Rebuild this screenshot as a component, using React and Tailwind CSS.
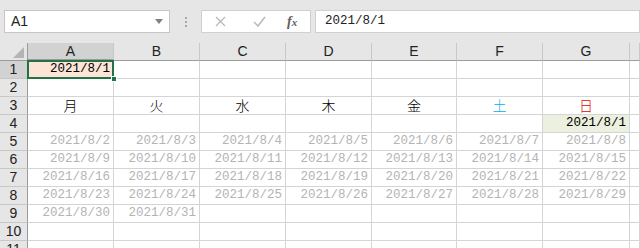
import React from "react";

const cols = ["A", "B", "C", "D", "E", "F", "G", ""];

// week rows of dates shown in gray
const weeks = [
  [2, 3, 4, 5, 6, 7, 8],
  [9, 10, 11, 12, 13, 14, 15],
  [16, 17, 18, 19, 20, 21, 22],
  [23, 24, 25, 26, 27, 28, 29],
  [30, 31],
];

const days = [
  { label: "月", color: "text-black" },
  { label: "火", color: "text-black" },
  { label: "水", color: "text-black" },
  { label: "木", color: "text-black" },
  { label: "金", color: "text-black" },
  { label: "土", color: "text-[#00b0f0]" },
  { label: "日", color: "text-[#e00000]" },
];

const numFont = "font-['Liberation_Mono','DejaVu_Sans_Mono',monospace]";

function Cell({ children, className = "" }) {
  return (
    <div
      className={`flex items-center border-r border-b border-[#d4d4d4] overflow-visible whitespace-nowrap ${className}`}
    >
      {children}
    </div>
  );
}

function RowHead({ n, active }) {
  return (
    <div
      className={`flex items-center justify-center border-r border-b border-[#c8c8c8] text-[14px] text-[#222] font-['Liberation_Sans',sans-serif] ${
        active ? "bg-[#d2d2d2] border-r-[#9b9b9b]" : "bg-[#e6e6e6] border-r-[#9b9b9b]"
      }`}
    >
      {n}
    </div>
  );
}

function DateCell({ text, className = "" }) {
  return (
    <Cell className={`justify-end pr-[3px] text-[12.5px] ${numFont} ${className}`}>
      {text}
    </Cell>
  );
}

function TopBar() {
  return (
    <div className="h-[43px] bg-[#e6e6e6] flex items-start pt-[10px] pl-[4px] font-['Liberation_Sans',sans-serif]">
      <div className="w-[166px] h-[23px] bg-white border border-[#c6c6c6] flex items-center justify-between pl-[6px] pr-[6px]">
        <span className="text-[14px] text-[#222]">A1</span>
        <svg width="8" height="5" viewBox="0 0 8 5">
          <path d="M0 0 L8 0 L4 5 Z" fill="#808080" />
        </svg>
      </div>
      <div className="w-[31px] h-[23px] flex flex-col items-center justify-center gap-[2px]">
        <span className="w-[2px] h-[2px] bg-[#a8a8a8]" />
        <span className="w-[2px] h-[2px] bg-[#a8a8a8]" />
        <span className="w-[2px] h-[2px] bg-[#a8a8a8]" />
      </div>
      <div className="w-[110px] h-[23px] bg-white border border-[#d0d0d0] flex items-center">
        <svg className="ml-[13px]" width="11" height="11" viewBox="0 0 11 11">
          <path d="M1 1 L10 10 M10 1 L1 10" stroke="#b8b8b8" strokeWidth="1.3" />
        </svg>
        <svg className="ml-[27px]" width="13" height="11" viewBox="0 0 13 11">
          <path d="M1 6 L5 10 L12 1" stroke="#b8b8b8" strokeWidth="1.5" fill="none" />
        </svg>
        <span className="ml-[21px] text-[14px] italic font-['Liberation_Serif',serif] text-[#606060] font-bold">
          f<span className="text-[11px]">x</span>
        </span>
      </div>
      <div className="ml-[4px] flex-1 h-[23px] bg-white border border-[#d0d0d0] flex items-center pl-[9px]">
        <span className={`text-[12.5px] text-[#222] ${numFont}`}>2021/8/1</span>
      </div>
    </div>
  );
}

export default function App() {
  const rows = [];

  // row 1
  rows.push(
    <React.Fragment key="r1">
      <RowHead n={1} active />
      <div className="relative">
        <DateCell text="2021/8/1" className="h-full bg-[#fce4d6] text-black" />
        <div className="absolute -left-[1px] -top-[1px] -right-[0px] -bottom-[0px] border-2 border-[#217346] pointer-events-none" />
        <div className="absolute -right-[3px] -bottom-[3px] w-[6px] h-[6px] bg-[#217346] border border-white" />
      </div>
      {cols.slice(1).map((c, i) => (
        <Cell key={i} />
      ))}
    </React.Fragment>
  );

  // row 2
  rows.push(
    <React.Fragment key="r2">
      <RowHead n={2} />
      {cols.map((c, i) => (
        <Cell key={i} />
      ))}
    </React.Fragment>
  );

  // row 3: weekdays
  rows.push(
    <React.Fragment key="r3">
      <RowHead n={3} />
      {days.map((d, i) => (
        <Cell
          key={i}
          className={`justify-center text-[14px] font-['Noto_Sans_CJK_JP',sans-serif] font-light ${d.color}`}
        >
          {d.label}
        </Cell>
      ))}
      <Cell />
    </React.Fragment>
  );

  // row 4
  rows.push(
    <React.Fragment key="r4">
      <RowHead n={4} />
      {cols.slice(0, 6).map((c, i) => (
        <Cell key={i} />
      ))}
      <DateCell text="2021/8/1" className="bg-[#ebf1de] text-black" />
      <Cell />
    </React.Fragment>
  );

  // rows 5-9
  weeks.forEach((w, ri) => {
    rows.push(
      <React.Fragment key={`w${ri}`}>
        <RowHead n={5 + ri} />
        {cols.map((c, i) =>
          i < w.length ? (
            <DateCell key={i} text={`2021/8/${w[i]}`} className="text-[#b4b4b4]" />
          ) : (
            <Cell key={i} />
          )
        )}
      </React.Fragment>
    );
  });

  // rows 10-11
  [10, 11].forEach((n) => {
    rows.push(
      <React.Fragment key={`e${n}`}>
        <RowHead n={n} />
        {cols.map((c, i) => (
          <Cell key={i} />
        ))}
      </React.Fragment>
    );
  });

  return (
    <div className="w-[640px] h-[248px] overflow-hidden bg-white">
      <TopBar />
      <div className="grid grid-cols-[28px_86px_86px_86px_86px_85px_86px_87px_1fr] auto-rows-[18px]">
        {/* header row */}
        <div className="relative bg-[#e6e6e6] border-r border-b border-[#9b9b9b]">
          <svg className="absolute right-[3px] bottom-[2px]" width="11" height="11" viewBox="0 0 11 11">
            <path d="M11 0 L11 11 L0 11 Z" fill="#b4b4b4" />
          </svg>
        </div>
        {cols.map((c, i) => (
          <div
            key={i}
            className={`flex items-center justify-center border-b border-b-[#9b9b9b] border-r border-r-[#c8c8c8] text-[14px] text-[#222] font-['Liberation_Sans',sans-serif] ${
              i === 0 ? "bg-[#d2d2d2] border-b-2 border-b-[#8a8a8a]" : "bg-[#e6e6e6]"
            }`}
          >
            {c}
          </div>
        ))}
        {rows}
      </div>
    </div>
  );
}
